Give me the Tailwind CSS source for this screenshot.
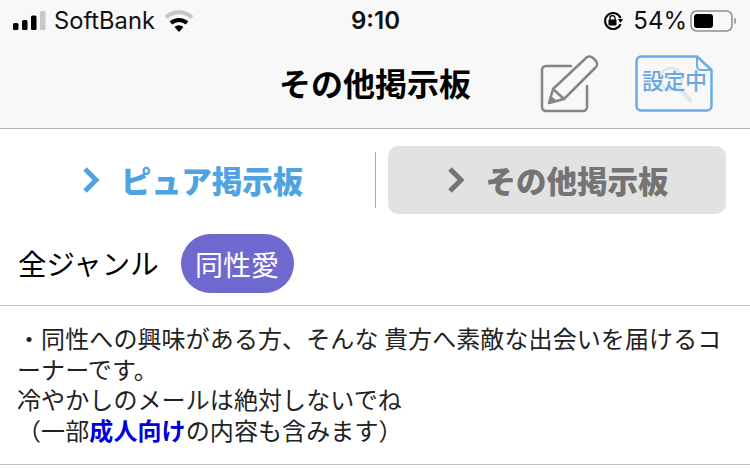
<!DOCTYPE html>
<html lang="ja">
<head>
  <meta charset="UTF-8" />
  <title>その他掲示板</title>
  <script src="https://cdn.jsdelivr.net/npm/@tailwindcss/browser@4"></script>
</head>
<body class="bg-white text-black font-['Noto_Sans_CJK_JP','Noto_Sans',sans-serif] h-[469px] overflow-hidden">
  <!-- header -->
  <div class="bg-[#f8f8f8] h-[129px] border-b border-[#b4b4b4]">
    <div class="relative flex items-center h-[42px] pl-[13px] pr-[14px] font-['Inter',sans-serif] text-[24px] text-[#111]">
      <svg width="35" height="22" viewBox="0 0 35 22" class="shrink-0">
        <rect x="0" y="13" width="5.5" height="7" rx="1.5" fill="#000"/>
        <rect x="9" y="10" width="5.5" height="10" rx="1.5" fill="#000"/>
        <rect x="18" y="5.500" width="5.500" height="14.500" rx="1.500" fill="#000"/>
        <rect x="27" y="1" width="5.500" height="19" rx="1.500" fill="#c8c8c8"/>
      </svg>
      <span class="ml-[6px] text-[23.700px]">SoftBank</span>
      <svg width="30" height="24" viewBox="0 0 30 24" class="ml-[9px] shrink-0">
        <path d="M2 8.500 A19 19 0 0 1 28 8.500" fill="none" stroke="#c6c6c6" stroke-width="4"/>
        <path d="M7 14 A12 12 0 0 1 23 14" fill="none" stroke="#000" stroke-width="4"/>
        <path d="M10.500 18 A6.500 6.500 0 0 1 19.500 18 L15 23 Z" fill="#000"/>
      </svg>
      <span class="absolute left-[351px] font-semibold">9:10</span>
      <div class="ml-auto flex items-center">
        <svg width="22" height="22" viewBox="0 0 22 22" class="shrink-0">
          <path d="M18.500 8 A8 8 0 1 0 18.500 14" fill="none" stroke="#000" stroke-width="2"/>
          <path d="M16 9 L21 9 L18.500 13 Z" fill="#000"/>
          <rect x="6.500" y="9.500" width="8" height="6" rx="1" fill="#000"/>
          <path d="M8 10 V8 A2.500 2.500 0 0 1 13 8 V10" fill="none" stroke="#000" stroke-width="1.300"/>
        </svg>
        <span class="ml-[9px]">54%</span>
        <svg width="46" height="24" viewBox="0 0 46 24" class="ml-[3px] shrink-0">
          <rect x="1" y="2" width="41" height="20" rx="5.500" fill="none" stroke="#8e8e8e" stroke-width="1.500"/>
          <rect x="4" y="5" width="19" height="14" rx="3" fill="#000"/>
          <rect x="44" y="9" width="2" height="6" rx="1" fill="#a8a8a8"/>
        </svg>
      </div>
    </div>
    <div class="relative flex items-center justify-center h-[86px]">
      <h1 class="text-[32px] font-bold leading-none mb-[7px]">その他掲示板</h1>
      <svg width="60" height="60" viewBox="0 0 60 60" class="absolute left-[540px] top-[13px]">
        <path d="M31 11 H6 A4 4 0 0 0 2 15 V52 A4 4 0 0 0 6 56 H43 A4 4 0 0 0 47 52 V31" fill="none" stroke="#858585" stroke-width="2.500" stroke-linecap="round"/>
        <path d="M9 48 L13 34 L45 4 A5 5 0 0 1 53 3 L56 6 A5 5 0 0 1 55 13 L24 44 Z" fill="#f8f8f8" stroke="#858585" stroke-width="2.500" stroke-linejoin="round"/>
        <path d="M13 34 L24 44" fill="none" stroke="#858585" stroke-width="2.500"/>
        <path d="M9 48 L11 41 L16 45 Z" fill="#858585"/>
      </svg>
      <div class="absolute left-[635px] top-[13px] w-[78px] h-[57px]">
        <svg width="78" height="57" viewBox="0 0 78 57" class="absolute inset-0">
          <path d="M62 1.500 H6 A4.500 4.500 0 0 0 1.500 6 V51 A4.500 4.500 0 0 0 6 55.500 H72 A4.500 4.500 0 0 0 76.500 51 V15 Z" fill="#f8f8f8" stroke="#68ade8" stroke-width="2.500" stroke-linejoin="round"/>
          <path d="M62 1.500 L62 11 A4 4 0 0 0 66 15 L76.500 15" fill="none" stroke="#68ade8" stroke-width="2"/>
          <circle cx="36" cy="24" r="11" fill="none" stroke="#dfe6ec" stroke-width="2.500"/>
          <path d="M44 33 L55 45" fill="none" stroke="#dfe6ec" stroke-width="4.500" stroke-linecap="round"/>
        </svg>
        <span class="absolute left-[7px] top-[9px] text-[22px] font-medium leading-[30px] text-[#68a8e0] whitespace-nowrap tracking-[-0.500px]">設定中</span>
      </div>
    </div>
  </div>

  <!-- tabs -->
  <div class="flex items-center h-[102px] pl-[16px] pr-[24px]">
    <a class="flex items-center justify-center w-[352px] h-[68px] text-[#4fa3e3]">
      <svg width="20" height="28" viewBox="0 0 20 28" class="shrink-0">
        <path d="M4 3 L15 14 L4 25" fill="none" stroke="#4fa3e3" stroke-width="5"/>
      </svg>
      <span class="ml-[20px] text-[30.500px] font-black leading-none">ピュア掲示板</span>
    </a>
    <div class="w-px h-[56px] bg-[#a8a8a8] ml-[7px] mr-[12px] shrink-0"></div>
    <a class="flex items-center justify-center flex-1 h-[68px] bg-[#e2e2e2] rounded-[10px] text-[#747474]">
      <svg width="20" height="28" viewBox="0 0 20 28" class="shrink-0">
        <path d="M4 3 L15 14 L4 25" fill="none" stroke="#747474" stroke-width="5"/>
      </svg>
      <span class="ml-[20px] text-[30.500px] font-black leading-none">その他掲示板</span>
    </a>
  </div>

  <!-- genre -->
  <div class="flex items-center h-[75px] pb-[9px] pl-[18px] border-b border-[#c4c4c4]">
    <span class="text-[28.400px] leading-none">全ジャンル</span>
    <span class="flex items-center justify-center ml-[22px] w-[113px] h-[59px] rounded-full bg-[#6f68cf] text-white text-[28px] leading-none">同性愛</span>
  </div>

  <!-- description -->
  <div class="h-[159px] pl-[17px] pr-[17px] pt-[17px] border-b border-[#c4c4c4] text-[24px] tracking-[0.100px] leading-[30.600px] text-[#222]">
    <p>・同性への興味がある方、そんな 貴方へ素敵な出会いを届けるコーナーです。<br>冷やかしのメールは絶対しないでね<br>（一部<strong class="font-bold text-[#0000d8]">成人向け</strong>の内容も含みます）</p>
  </div>
</body>
</html>
